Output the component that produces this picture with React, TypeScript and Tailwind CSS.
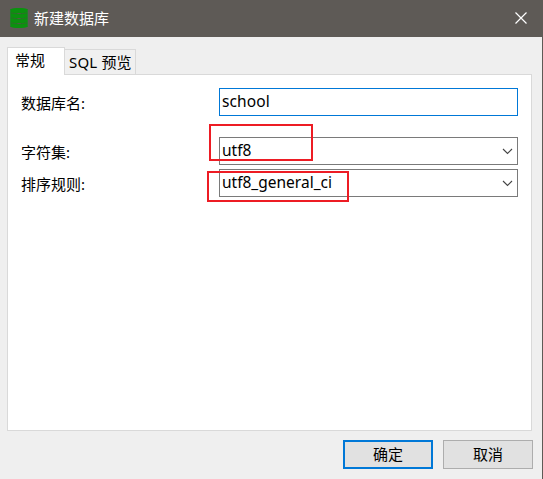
import type { ReactNode } from 'react';

function DatabaseIcon() {
  return (
    <svg width="18" height="20" viewBox="0 0 18 20" className="mb-px shrink-0">
      <path d="M0 1.500C2 .2 5 0 9 0s7 .2 9 1.500v17c-2 1.300-5 1.500-9 1.500s-7-.2-9-1.500z" fill="#0b920f" />
      <path
        d="M0 4.200c2 1.200 5 1.600 9 1.600s7-.4 9-1.600M0 9.200c2 1.200 5 1.600 9 1.600s7-.4 9-1.600M0 14.200c2 1.200 5 1.600 9 1.600s7-.4 9-1.600"
        fill="none"
        stroke="#2d6f29"
        strokeWidth="1"
      />
      <path d="M.5 2v16M17.500 2v16" stroke="#23802a" strokeWidth="1" />
      <path d="M7.500 5.500h3M7.500 10.500h3M7.500 15.500h3" stroke="#4a5f40" strokeWidth="1" />
    </svg>
  );
}

function Chevron() {
  return (
    <svg width="11" height="7" viewBox="0 0 11 7" className="shrink-0">
      <path d="M1 1l4.500 4.500L10 1" fill="none" stroke="#444" strokeWidth="1.100" />
    </svg>
  );
}

function Label({ children }: { children: ReactNode }) {
  return <span className="w-[198px] shrink-0 pt-[5px] leading-5">{children}</span>;
}

function Select({ value, children }: { value: string; children: ReactNode }) {
  return (
    <div className="relative flex h-7 w-[299px] items-center justify-between border border-[#7a7a7a] bg-white pr-1 pl-[2px]">
      <span className="pb-[2px] text-[15.5px] leading-5">{value}</span>
      <Chevron />
      {children}
    </div>
  );
}

export default function App() {
  return (
    <div className="flex h-[479px] w-[543px] flex-col overflow-hidden border-r border-[#5e5a56] bg-[#efefef] font-['Noto_Sans','Noto_Sans_CJK_SC',sans-serif] text-[15px] text-black">
      <header className="flex h-[37px] shrink-0 items-center bg-[#5e5a56] pr-[15px] pl-[10px] text-white">
        <DatabaseIcon />
        <span className="ml-[6px] pb-[2px] leading-5">新建数据库</span>
        <svg width="12" height="12" viewBox="0 0 12 12" className="mb-px ml-auto">
          <path d="M.5.5l11 11M11.500.5l-11 11" stroke="#fff" strokeWidth="1.200" />
        </svg>
      </header>

      <div className="flex h-[38px] shrink-0 items-end pl-[7px]">
        <div className="z-10 h-7 w-[58px] border border-b-0 border-[#d9d9d9] bg-white pt-[2px] pl-[7px] leading-5">常规</div>
        <div className="-ml-px h-[26px] w-[72px] border border-[#d9d9d9] bg-[#f0f0f0] pt-[2px] pl-1 leading-5 whitespace-nowrap">
          <span className="tracking-[0.2px]">SQL </span>预览
        </div>
      </div>

      <main className="-mt-px ml-[7px] flex h-[357px] w-[525px] shrink-0 flex-col border border-[#d9d9d9] bg-white pt-[13px] pl-[13px]">
        <div className="flex">
          <Label>数据库名:</Label>
          <div className="flex h-7 w-[299px] items-center border border-[#0078d7] pl-[2px]">
            <span className="pb-[2px] text-[15.5px] leading-5 tracking-[0.1px]">school</span>
          </div>
        </div>
        <div className="mt-[21px] flex">
          <Label>字符集:</Label>
          <Select value="utf8">
            <div className="absolute -top-[14px] -left-[11px] h-[37px] w-[104px] border-2 border-[#ed1c24]" />
          </Select>
        </div>
        <div className="mt-1 flex">
          <Label>排序规则:</Label>
          <Select value="utf8_general_ci">
            <div className="absolute top-[1px] -left-[13px] h-[31px] w-[142px] border-2 border-[#ed1c24]" />
          </Select>
        </div>
      </main>

      <footer className="mt-[9px] flex justify-end gap-[10px] pr-[9px]">
        <button className="h-[29px] w-[90px] border-2 border-[#0078d7] bg-[#e1e1e1] pb-[2px] leading-5">确定</button>
        <button className="h-[29px] w-[90px] border border-[#adadad] bg-[#e1e1e1] pb-[2px] leading-5">取消</button>
      </footer>
    </div>
  );
}
